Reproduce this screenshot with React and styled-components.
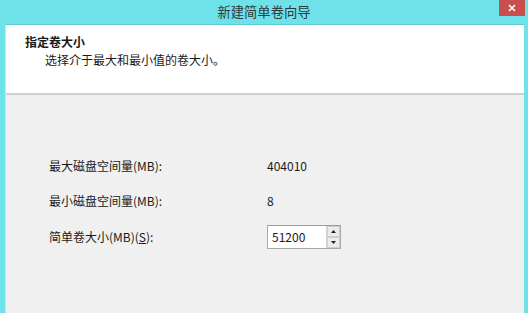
import React from "react";
import styled, { createGlobalStyle } from "styled-components";

const Global = createGlobalStyle`
  html, body { margin: 0; padding: 0; }
  body { width: 528px; height: 313px; overflow: hidden; background: #6fe1e9; }
`;

const FONT = `"Noto Sans CJK SC", "Noto Sans", sans-serif`;

const Frame = styled.div`
  width: 528px;
  height: 313px;
  display: flex;
  flex-direction: column;
  background: #6fe1e9;
  font-family: ${FONT};
  color: #1a1a1a;
  box-sizing: border-box;
`;

const TitleBar = styled.div`
  position: relative;
  height: 24px;
  display: flex;
  align-items: center;
  justify-content: center;
  flex-shrink: 0;
`;

const Title = styled.div`
  font-size: 13.3px;
  color: #2d3a3c;
  line-height: 24px;
`;

const CloseButton = styled.div`
  position: absolute;
  right: 3px;
  top: 0;
  width: 26px;
  height: 16px;
  background: #c94f4f;
  display: flex;
  align-items: center;
  justify-content: center;
`;

const Body = styled.div`
  flex: 1;
  margin: 0 4px 0 5px;
  display: flex;
  flex-direction: column;
  background: #f0f0f0;
  border-top: 1px solid #5ccbd3;
  border-left: 1px solid #b8eef2;
`;

const Header = styled.div`
  height: 70px;
  flex-shrink: 0;
  background: #ffffff;
  border-bottom: 2px solid #cfcfcf;
  padding: 9px 0 0 19px;
  box-sizing: border-box;
`;

const HeaderTitle = styled.div`
  font-size: 12px;
  font-weight: 700;
  line-height: 16px;
`;

const HeaderSub = styled.div`
  font-size: 12px;
  line-height: 16px;
  padding-left: 20px;
  margin-top: 2px;
`;

const Content = styled.div`
  padding: 53px 0 0 43px;
  display: grid;
  grid-template-columns: 218px auto;
  grid-auto-rows: 35.5px;
  align-items: center;
  font-size: 12px;
`;

const Label = styled.div`
  font-size: 12px;
  line-height: 16px;
`;

const Value = styled.div`
  font-size: 12px;
  line-height: 16px;
`;

const SpinBox = styled.div`
  width: 74px;
  height: 24px;
  box-sizing: border-box;
  border: 1px solid #a9a9a9;
  border-top-color: #9c9c9c;
  background: #fff;
  display: flex;
  margin-left: 0;
  justify-self: start;
`;

const SpinInput = styled.div`
  flex: 1;
  font-size: 12px;
  line-height: 22px;
  padding-left: 4px;
`;

const SpinButtons = styled.div`
  width: 13px;
  display: flex;
  flex-direction: column;
  border-left: 1px solid #d6d6d6;
`;

const SpinBtn = styled.div`
  flex: 1;
  background: #ececec;
  border: 1px solid #cfcfcf;
  display: flex;
  align-items: center;
  justify-content: center;
`;

const Underline = styled.span`
  text-decoration: underline;
`;

const Arrow = ({ up }) => (
  <svg width="5" height="3" viewBox="0 0 5 3">
    {up ? <path d="M0 3 L2.5 0 L5 3 Z" fill="#222" /> : <path d="M0 0 L2.5 3 L5 0 Z" fill="#222" />}
  </svg>
);

export default function App() {
  return (
    <>
      <Global />
      <Frame>
        <TitleBar>
          <Title>新建简单卷向导</Title>
          <CloseButton>
            <svg width="8" height="8" viewBox="0 0 8 8">
              <path d="M1 1 L7 7 M7 1 L1 7" stroke="#fff" strokeWidth="1.6" />
            </svg>
          </CloseButton>
        </TitleBar>
        <Body>
          <Header>
            <HeaderTitle>指定卷大小</HeaderTitle>
            <HeaderSub>选择介于最大和最小值的卷大小。</HeaderSub>
          </Header>
          <Content>
            <Label>最大磁盘空间量(MB):</Label>
            <Value>404010</Value>
            <Label>最小磁盘空间量(MB):</Label>
            <Value>8</Value>
            <Label>
              简单卷大小(MB)(<Underline>S</Underline>):
            </Label>
            <SpinBox>
              <SpinInput>51200</SpinInput>
              <SpinButtons>
                <SpinBtn>
                  <Arrow up />
                </SpinBtn>
                <SpinBtn>
                  <Arrow />
                </SpinBtn>
              </SpinButtons>
            </SpinBox>
          </Content>
        </Body>
      </Frame>
    </>
  );
}
